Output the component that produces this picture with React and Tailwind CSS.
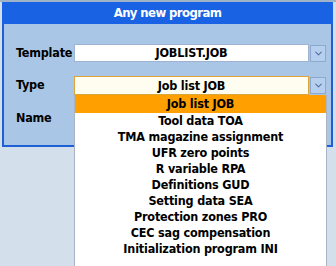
import { ChevronDown } from "lucide-react";

const font = { fontFamily: '"Liberation Sans Narrow", "DejaVu Sans Condensed", "Liberation Sans", sans-serif' };

const types = [
  "Job list JOB",
  "Tool data TOA",
  "TMA magazine assignment",
  "UFR zero points",
  "R variable RPA",
  "Definitions GUD",
  "Setting data SEA",
  "Protection zones PRO",
  "CEC sag compensation",
  "Initialization program INI",
];

const DropButton = () => (
  <div className="w-[16px] h-[17px] ml-[1px] flex items-center justify-center bg-[#b7cfee] border border-[#8ea9cf]">
    <ChevronDown size={11} strokeWidth={2.2} className="text-[#4d6fa6]" />
  </div>
);

const App = () => {
  return (
    <div
      className="relative w-[336px] h-[266px] overflow-hidden bg-[#d3dfeb] text-black font-bold tracking-[-0.2px]"
      style={font}
    >
      {/* strip behind the dialog */}
      <div className="h-[2px] bg-[#9fb2c8]" />

      {/* Dialog */}
      <div className="ml-[2px] w-[331px] border-x-2 border-b-2 border-[#1f5fd6]">
        <div className="h-[22px] -mx-[2px] bg-[#1862e3] text-white text-[13px] leading-[22px] text-center tracking-[-0.6px]">
          Any new program
        </div>
        <div className="h-[121px] bg-[#a9c6e6] pl-[12px] pt-[20px] text-[12.5px]">
          <div className="flex items-center h-[18px]">
            <span className="w-[58px]">Template</span>
            <div className="w-[235px] h-[18px] bg-white border border-[#9db3cf] text-center leading-[16px]">
              JOBLIST.JOB
            </div>
            <DropButton />
          </div>

          <div className="flex items-center h-[18px] mt-[14px]">
            <span className="w-[58px]">Type</span>
            <div className="w-[235px] h-[19px] bg-[#fffcf0] border border-[#dca53c] text-center leading-[17px]">
              Job list JOB
            </div>
            <DropButton />
          </div>

          <div className="flex items-center h-[18px] mt-[15px]">
            <span className="w-[58px]">Name</span>
          </div>
        </div>
      </div>

      {/* Open type list */}
      <div className="absolute left-[74px] top-[95px] w-[253px] h-[180px] bg-white border-x border-[#a9b5c4] text-[12.5px] text-center">
        {types.map((t, i) => (
          <div
            key={t}
            className={i === 0 ? "h-[18px] leading-[18px] bg-[#ff9f00]" : "h-[16px] leading-[16px]"}
          >
            {t}
          </div>
        ))}
      </div>
    </div>
  );
};

export default App;
